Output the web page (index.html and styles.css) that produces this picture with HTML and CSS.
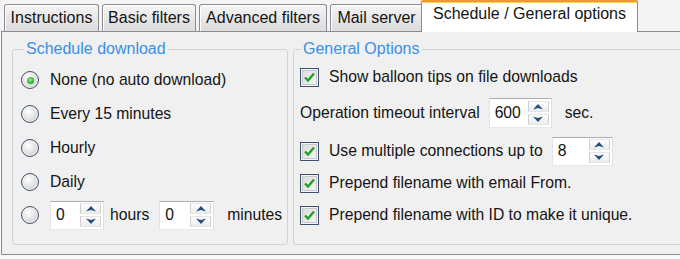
FILE: index.html
```html
<!DOCTYPE html>
<html lang="en">

<head>
    <meta charset="utf-8">
    <title>Schedule / General options</title>
    <link rel="stylesheet" href="styles.css">
</head>

<body>
    <div class="tabs">
        <div class="tab tab-instructions">Instructions</div>
        <div class="tab tab-basic">Basic filters</div>
        <div class="tab tab-advanced">Advanced filters</div>
        <div class="tab tab-mail">Mail server</div>
        <div class="tab tab-schedule active">Schedule / General options</div>
    </div>

    <div class="page">
        <fieldset class="group schedule">
            <legend>Schedule download</legend>
            <div class="group-body">
                <div class="opt"><span class="radio checked"></span>None (no auto download)</div>
                <div class="opt"><span class="radio"></span>Every 15 minutes</div>
                <div class="opt"><span class="radio"></span>Hourly</div>
                <div class="opt"><span class="radio"></span>Daily</div>
                <div class="opt opt-custom">
                    <span class="radio"></span>
                    <span class="spin spin-hours">
                        <span class="spin-val">0</span>
                        <span class="spin-btns">
                            <span class="spin-btn"><svg width="10" height="7" viewBox="0 0 10 7"><polygon points="0,6.5 5,1 10,6.5 5,5" /></svg></span>
                            <span class="spin-btn"><svg width="10" height="7" viewBox="0 0 10 7"><polygon points="0,0.5 5,6 10,0.5 5,2" /></svg></span>
                        </span>
                    </span>
                    <span class="unit-hours">hours</span>
                    <span class="spin spin-minutes">
                        <span class="spin-val">0</span>
                        <span class="spin-btns">
                            <span class="spin-btn"><svg width="10" height="7" viewBox="0 0 10 7"><polygon points="0,6.5 5,1 10,6.5 5,5" /></svg></span>
                            <span class="spin-btn"><svg width="10" height="7" viewBox="0 0 10 7"><polygon points="0,0.5 5,6 10,0.5 5,2" /></svg></span>
                        </span>
                    </span>
                    <span class="unit-minutes">minutes</span>
                </div>
            </div>
        </fieldset>

        <fieldset class="group general">
            <legend>General Options</legend>
            <div class="group-body">
                <div class="row row-balloon">
                    <span class="check"><svg width="17" height="17" viewBox="0 0 17 17"><path d="M4 8.5 L7 11.5 L13 4.5" /></svg></span>
                    Show balloon tips on file downloads
                </div>
                <div class="row row-timeout">
                    Operation timeout interval
                    <span class="spin spin-timeout">
                        <span class="spin-val">600</span>
                        <span class="spin-btns">
                            <span class="spin-btn"><svg width="10" height="7" viewBox="0 0 10 7"><polygon points="0,6.5 5,1 10,6.5 5,5" /></svg></span>
                            <span class="spin-btn"><svg width="10" height="7" viewBox="0 0 10 7"><polygon points="0,0.5 5,6 10,0.5 5,2" /></svg></span>
                        </span>
                    </span>
                    <span class="unit-sec">sec.</span>
                </div>
                <div class="row row-conn">
                    <span class="check"><svg width="17" height="17" viewBox="0 0 17 17"><path d="M4 8.5 L7 11.5 L13 4.5" /></svg></span>
                    Use multiple connections up to
                    <span class="spin spin-conn">
                        <span class="spin-val">8</span>
                        <span class="spin-btns">
                            <span class="spin-btn"><svg width="10" height="7" viewBox="0 0 10 7"><polygon points="0,6.5 5,1 10,6.5 5,5" /></svg></span>
                            <span class="spin-btn"><svg width="10" height="7" viewBox="0 0 10 7"><polygon points="0,0.5 5,6 10,0.5 5,2" /></svg></span>
                        </span>
                    </span>
                </div>
                <div class="row row-from">
                    <span class="check"><svg width="17" height="17" viewBox="0 0 17 17"><path d="M4 8.5 L7 11.5 L13 4.5" /></svg></span>
                    Prepend filename with email From.
                </div>
                <div class="row row-id">
                    <span class="check"><svg width="17" height="17" viewBox="0 0 17 17"><path d="M4 8.5 L7 11.5 L13 4.5" /></svg></span>
                    Prepend filename with ID to make it unique.
                </div>
            </div>
        </fieldset>
    </div>
</body>
</html>
```

FILE: styles.css
```css
html,
body {
    padding: 0;
    margin: 0;
}

* {
    box-sizing: border-box;
}

body {
    width: 680px;
    height: 259px;
    overflow: hidden;
    background-color: #f9f9f9;
    font-family: "Liberation Sans", Arial, sans-serif;
    font-size: 16px;
    color: #141414;
}

/* tab strip */

.tabs {
    display: flex;
    align-items: flex-end;
    height: 31px;
    padding-left: 4px;
    gap: 3px;
    background-color: #f4f4f4;
}

.tab {
    height: 27px;
    border: 1px solid #898c95;
    border-bottom: 0;
    border-radius: 3px 3px 0 0;
    background: linear-gradient(#f5f5f5, #e6e6e6 55%, #dcdcdc);
    box-shadow: inset 1px 1px 0 #fff;
    text-align: center;
    line-height: 26px;
    white-space: nowrap;
}

.tab-instructions { width: 95px; }
.tab-basic { width: 94px; }
.tab-advanced { width: 128px; }
.tab-mail { width: 93px; }

.tab.active {
    position: relative;
    z-index: 1;
    width: 217px;
    height: 32px;
    margin-left: -5px;
    margin-bottom: -1px;
    border-top: 2px solid #eb9a2c;
    border-radius: 2px 2px 0 0;
    background: #fff;
    box-shadow: inset 0 1px 0 #ffcf5c;
    line-height: 24px;
}

/* tab page */

.page {
    display: flex;
    gap: 5px;
    width: 760px;
    height: 224px;
    margin-left: 1px;
    padding: 8px 0 0 10px;
    border: 1px solid #898c95;
    border-right: 0;
    background-color: #f0f0f0;
    font-size: 15.7px;
}

.group {
    margin: 0;
    padding: 0;
    height: 205px;
    border: 1px solid #d3d3d6;
    border-radius: 3px;
}

.group legend {
    padding: 0 2px;
    line-height: 18px;
    font-size: 16px;
    color: #3b8fe4;
}

.schedule {
    width: 276px;
}

.schedule legend {
    margin-left: 11px;
}

.general {
    width: 420px;
}

.general legend {
    margin-left: 7px;
}

/* schedule radios */

.schedule .group-body {
    padding: 5px 0 0 8px;
}

.opt {
    display: flex;
    align-items: center;
    height: 34px;
    white-space: nowrap;
}

.opt-custom {
    height: 32px;
}

.radio {
    position: relative;
    flex: none;
    width: 18px;
    height: 18px;
    margin-right: 11px;
    border: 1px solid #3f536f;
    border-radius: 50%;
    background: radial-gradient(circle at 40% 35%, #ffffff, #e2e2e2 50%, #c4c4c4);
    box-shadow: inset 0 0 0 1px #f2f2f2;
}

.radio.checked::after {
    content: "";
    position: absolute;
    left: 4.5px;
    top: 4.5px;
    width: 7px;
    height: 7px;
    border-radius: 50%;
    background: radial-gradient(circle at 45% 40%, #9ef09e, #2cb82c 55%, #128a12);
}

.unit-hours {
    margin: 0 10px 0 6px;
}

.unit-minutes {
    margin-left: 13px;
}

/* spin boxes */

.spin {
    display: flex;
    align-items: center;
    flex: none;
    height: 29px;
    padding: 0 2px 0 5px;
    border: 1px solid #abadb3;
    border-color: #abadb3 #dbdfe6 #e3e9ef #e2e3ea;
    background-color: #fff;
}

.spin-val {
    flex: 1;
    color: #111;
}

.spin-btns {
    display: flex;
    flex-direction: column;
    gap: 2px;
}

.spin-btn {
    display: flex;
    align-items: center;
    justify-content: center;
    width: 21px;
    height: 11px;
    border: 1px solid #cfcfcf;
    border-top-color: #e4e4e4;
    border-bottom-color: #e4e4e4;
    background: linear-gradient(#fdfdfd, #ededed);
}

.spin-btn polygon {
    fill: #1d4f80;
}

.spin-hours { width: 54px; }
.spin-minutes { width: 55px; }
.spin-timeout { width: 63px; height: 30px; margin-left: 9px; }
.spin-conn { width: 61px; margin-left: 9px; }

/* general options */

.general .group-body {
    padding: 3px 0 0 6px;
}

.row {
    display: flex;
    align-items: center;
    height: 32px;
    white-space: nowrap;
}

.row-timeout { height: 40px; }
.row-conn { height: 36px; }
.row-from { height: 28px; }
.row-id { height: 36px; }

.unit-sec {
    margin-left: 13px;
}

.check {
    display: flex;
    align-items: center;
    justify-content: center;
    flex: none;
    width: 19px;
    height: 19px;
    margin-right: 10px;
    border: 1px solid #3a5170;
    background: linear-gradient(135deg, #d9d9d9, #f7f7f7);
    box-shadow: inset 0 0 0 1px #f4f4f4, inset 0 0 0 2px #c7c9cc;
}

.check path {
    fill: none;
    stroke: #22a022;
    stroke-width: 2.4;
}
```
